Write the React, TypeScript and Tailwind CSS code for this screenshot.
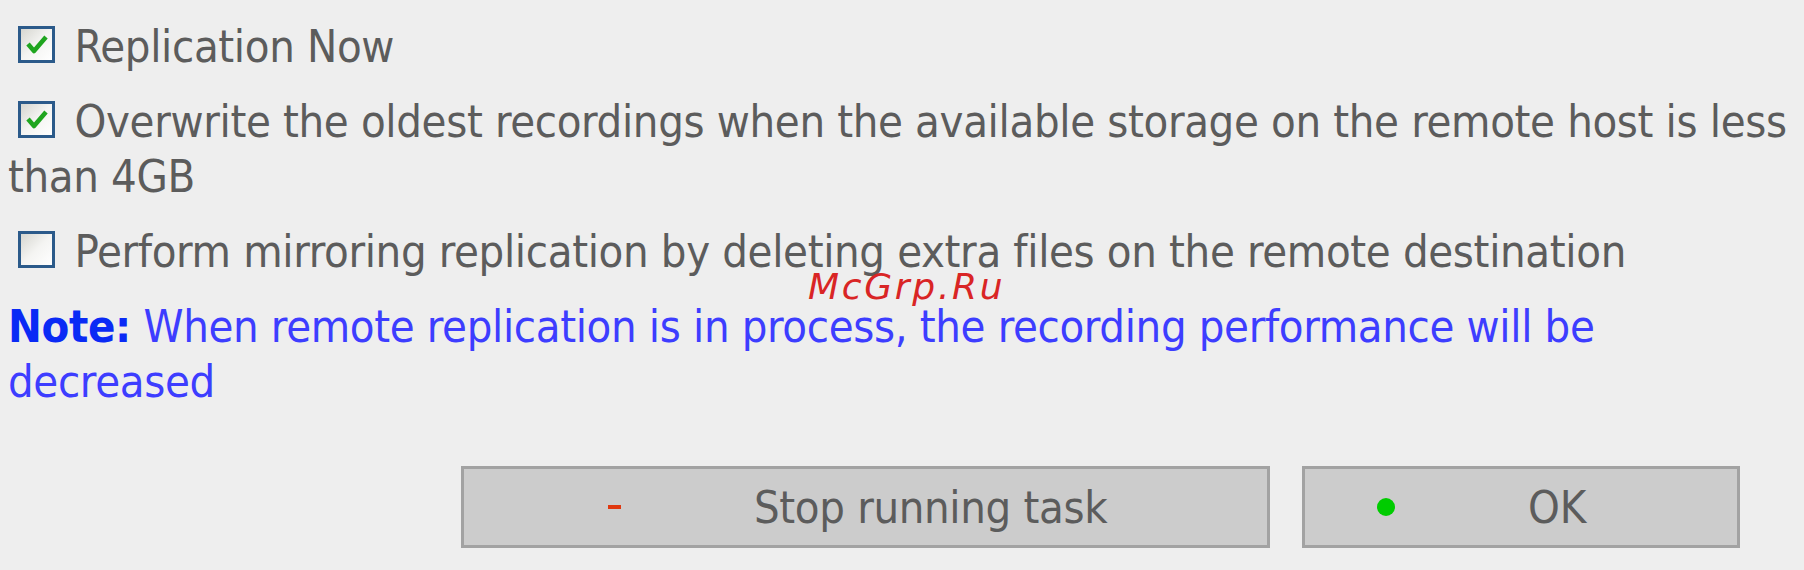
/**
 * Remote replication options dialog (bottom part)
 */

const FONT = { fontFamily: '"DejaVu Sans Condensed", "DejaVu Sans", Verdana, sans-serif' };

function CheckBox({ checked = false }: { checked?: boolean }) {
  return (
    <span className="inline-block w-[37px] h-[37px] ml-[10px] mr-[7px] align-[-1px] border-[3px] border-[#2b5a8a] bg-linear-to-br from-[#d6d6d0] via-[#f4f4f2] to-white">
      {checked && (
        <svg viewBox="0 0 31 31" className="w-full h-full">
          <path d="M7 15 L13 22 L25 8" fill="none" stroke="#1fa51f" strokeWidth="4.5" strokeLinejoin="round" />
        </svg>
      )}
    </span>
  );
}

export default function App() {
  return (
    <div
      className="relative w-[1804px] h-[570px] overflow-hidden bg-[#eeeeee] pl-[8px] pr-[4px] pt-[19px] font-stretch-condensed"
      style={FONT}
    >
      {/* Options */}
      <p className="mb-[20px] text-[45px] leading-[55px] tracking-[-0.35px] text-[#5c5c5c]">
        <CheckBox checked /> Replication Now
      </p>
      <p className="mb-[20px] text-[45px] leading-[55px] tracking-[-0.35px] text-[#5c5c5c]">
        <CheckBox checked /> Overwrite the oldest recordings when the available storage on the remote host is less
        <br />
        than 4GB
      </p>
      <p className="mb-[20px] text-[45px] leading-[55px] tracking-[-0.35px] text-[#5c5c5c]">
        <CheckBox /> Perform mirroring replication by deleting extra files on the remote destination
      </p>
      <p className="text-[45px] leading-[55px] tracking-[-0.35px] text-[#3d3dff]">
        <span className="font-bold text-[#0a2af5]">Note:</span> When remote replication is in process, the recording performance will be
        <br />
        decreased
      </p>

      {/* Actions */}
      <div className="flex justify-end gap-[32px] mt-[57px] mr-[60px]">
        <button className="flex items-center w-[809px] h-[82px] pl-[144px] border-[3px] border-[#a2a2a2] bg-[#cccccc]">
          <span className="w-[13px] h-[4px] bg-[#e0380f]" />
          <span className="ml-[133px] text-[45px] leading-[45px] tracking-[-0.35px] text-[#5c5c5c] whitespace-nowrap">
            Stop running task
          </span>
        </button>
        <button className="flex items-center w-[438px] h-[82px] pl-[72px] border-[3px] border-[#a2a2a2] bg-[#cccccc]">
          <span className="w-[18px] h-[18px] rounded-full bg-[#00cc00]" />
          <span className="ml-[133px] text-[45px] leading-[45px] text-[#5c5c5c]">OK</span>
        </button>
      </div>

      {/* Watermark */}
      <div
        className="absolute left-[808px] top-[269px] text-[36px] leading-none italic tracking-[2.7px] text-[#d92525]"
        style={{ fontFamily: '"DejaVu Sans", sans-serif', fontStretch: 'normal' }}
      >
        McGrp.Ru
      </div>
    </div>
  );
}
